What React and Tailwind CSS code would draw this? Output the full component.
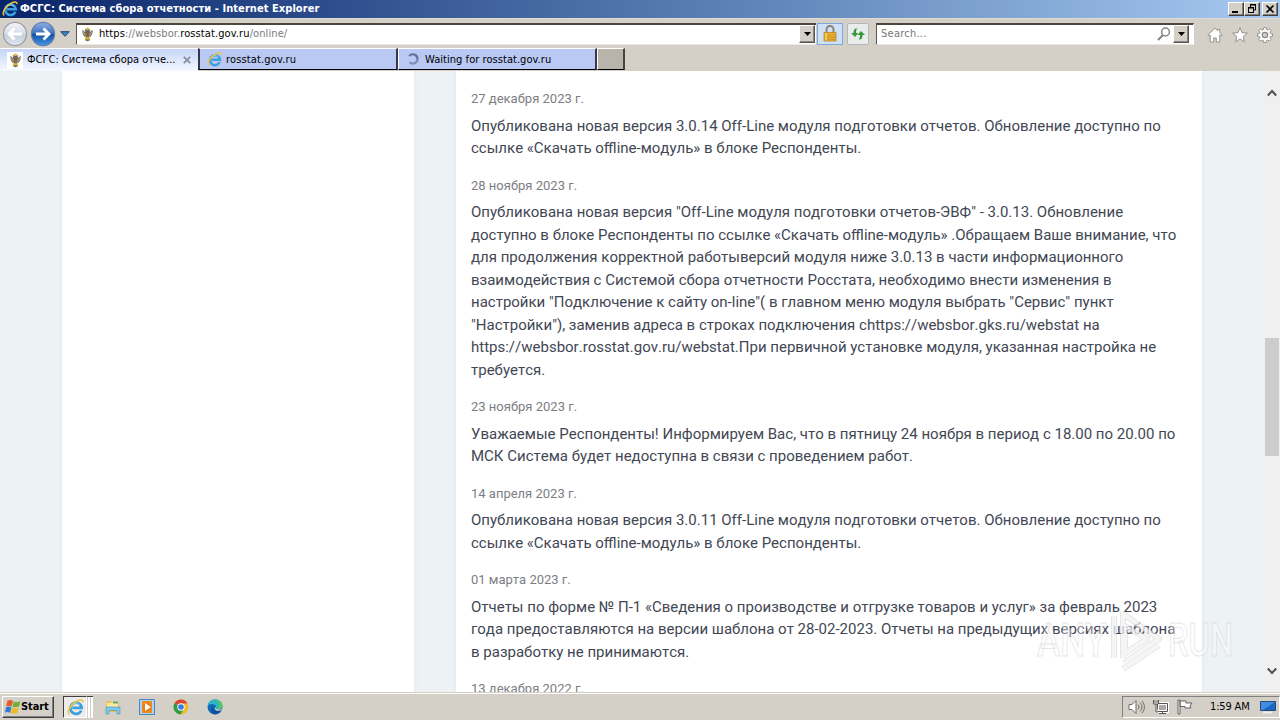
import React from 'react';

const news = [
  {
    date: '27 декабря 2023 г.',
    lines: [
      'Опубликована новая версия 3.0.14 Off-Line модуля подготовки отчетов. Обновление доступно по',
      'ссылке «Скачать offline-модуль» в блоке Респонденты.',
    ],
  },
  {
    date: '28 ноября 2023 г.',
    lines: [
      'Опубликована новая версия "Off-Line модуля подготовки отчетов-ЭВФ" - 3.0.13. Обновление',
      'доступно в блоке Респонденты по ссылке «Скачать offline-модуль» .Обращаем Ваше внимание, что',
      'для продолжения корректной работыверсий модуля ниже 3.0.13 в части информационного',
      'взаимодействия с Системой сбора отчетности Росстата, необходимо внести изменения в',
      'настройки "Подключение к сайту on-line"( в главном меню модуля выбрать "Сервис" пункт',
      '"Настройки"), заменив адреса в строках подключения сhttps://websbor.gks.ru/webstat на',
      'https://websbor.rosstat.gov.ru/webstat.При первичной установке модуля, указанная настройка не',
      'требуется.',
    ],
  },
  {
    date: '23 ноября 2023 г.',
    lines: [
      'Уважаемые Респонденты! Информируем Вас, что в пятницу 24 ноября в период с 18.00 по 20.00 по',
      'МСК Система будет недоступна в связи с проведением работ.',
    ],
  },
  {
    date: '14 апреля 2023 г.',
    lines: [
      'Опубликована новая версия 3.0.11 Off-Line модуля подготовки отчетов. Обновление доступно по',
      'ссылке «Скачать offline-модуль» в блоке Респонденты.',
    ],
  },
  {
    date: '01 марта 2023 г.',
    lines: [
      'Отчеты по форме № П-1 «Сведения о производстве и отгрузке товаров и услуг» за февраль 2023',
      'года предоставляются на версии шаблона от 28-02-2023. Отчеты на предыдущих версиях шаблона',
      'в разработку не принимаются.',
    ],
  },
  { date: '13 декабря 2022 г.', lines: [] },
];

const IeIcon = ({ className }) => (
  <svg viewBox="0 0 16 16" className={className} fill="none">
    <path d="M13.4 10.8A5.3 5.3 0 1 1 13.8 8.3H5" stroke="#3d9fe0" strokeWidth="2.6" />
    <path d="M4 6.5A4.8 4.8 0 0 1 12 5.5" stroke="#8fd3f6" strokeWidth=".9" />
    <path d="M2.2 14.4C-.8 12 3.8 5 9.2 2.1c3-1.6 6-1.8 5.8 1" stroke="#efc535" strokeWidth="1.5" />
  </svg>
);

const EagleIcon = ({ className }) => (
  <svg viewBox="0 0 16 16" className={className}>
    <path d="M8 3.2 6.2 2 4.8 3.1l1 .9-.5 1.2L2.4 3 3 7.6l1.8 2.9 2-.4L5.4 14 8 15.2l2.6-1.2-1.4-3.9 2 .4L13 7.6l.6-4.6-2.9 2.2-.5-1.2 1-.9L9.8 2z" fill="#6b675a" />
    <path d="M3.4 5 5 9M12.6 5 11 9M5 6l1 3M11 6l-1 3" stroke="#c9bd92" strokeWidth=".7" />
    <path d="M6.6 5.8h2.8v3L8 10.4 6.6 8.8z" fill="#8e5f3c" />
    <path d="M6.5.8h3v2.4h-3zM5.5 11h5v2.2h-5z" fill="#dbb52c" />
  </svg>
);

const NavCircle = ({ forward }) => (
  <svg viewBox="0 0 26 26" className="h-[26px] w-[26px]">
    <defs>
      <linearGradient id={forward ? 'navFwd' : 'navBack'} x1="0" y1="0" x2="0" y2="1">
        <stop offset="0" stopColor={forward ? '#8fb0e4' : '#f5f5f7'} />
        <stop offset=".48" stopColor={forward ? '#3b70bf' : '#d7dce6'} />
        <stop offset=".5" stopColor={forward ? '#154b9e' : '#c4ccda'} />
        <stop offset="1" stopColor={forward ? '#419ae8' : '#dfe7f1'} />
      </linearGradient>
    </defs>
    <circle cx="13" cy="13" r="11.6" fill={forward ? 'url(#navFwd)' : 'url(#navBack)'} stroke={forward ? '#6580ad' : '#9aa0aa'} strokeWidth="1.2" />
    <path
      d={forward ? 'M6 13H19M13.5 7.5 19 13l-5.5 5.5' : 'M20 13H7M12.5 7.5 7 13l5.5 5.5'}
      fill="none"
      stroke="#fff"
      strokeWidth="2.8"
    />
  </svg>
);

const DropButton = () => (
  <div className="flex h-[18px] w-[16px] shrink-0 items-center justify-center border border-t-white border-l-white border-r-[#55514c] border-b-[#55514c] bg-[#d4d0c8] shadow-[inset_-1px_-1px_0_#8b8780]">
    <svg viewBox="0 0 7 4" className="h-1 w-[7px]">
      <path d="M0 0h7L3.5 4z" fill="#000" />
    </svg>
  </div>
);

const WindowButton = ({ children }) => (
  <div className="h-[14px] w-4 border border-t-white border-l-white border-r-[#404040] border-b-[#404040] bg-[#d4d0c8] shadow-[inset_-1px_-1px_0_#808080]">
    <svg viewBox="0 0 14 12" className="h-3 w-[14px]" fill="none" stroke="#000">
      {children}
    </svg>
  </div>
);

const TitleBar = () => (
  <div className="flex h-[18px] items-center bg-linear-to-r from-[#0a246a] to-[#a6caf0] pl-[2px] pr-[2px]">
    <IeIcon className="h-4 w-4" />
    <span className="ml-[2px] flex-1 whitespace-nowrap pt-px text-[11px] font-bold tracking-[0.06px] text-white">
      ФСГС: Система сбора отчетности - Internet Explorer
    </span>
    <div className="flex">
      <WindowButton>
        <path d="M3 9h6" strokeWidth="2" />
      </WindowButton>
      <WindowButton>
        <path d="M5 2h6M5.5 2v3M10.5 2v5H9M3 5h6M3.5 5v5M3 9.5h6M8.5 5v5" />
        <path d="M5 1.5h6M3 4.5h6" />
      </WindowButton>
      <div className="w-[2px]" />
      <WindowButton>
        <path d="m3.5 2.5 7 7m0-7-7 7" strokeWidth="1.7" />
      </WindowButton>
    </div>
  </div>
);

const AddressRow = () => (
  <div className="flex h-[30px] items-center border-t border-[#dedbd0] pl-[2px]">
    <NavCircle />
    <div className="ml-[2px]">
      <NavCircle forward />
    </div>
    <svg viewBox="0 0 10 6" className="ml-[4px] h-[6px] w-[10px]">
      <path d="M.7.7h8.6L5 5.3z" fill="#3b86c4" stroke="#25426e" />
    </svg>
    <div className="ml-[6px] flex h-[22px] w-[740px] items-center border-t-2 border-l border-b border-t-[#4d463f] border-l-[#5c554d] border-b-[#eee8e2] bg-white pr-px pl-[3px]">
      <EagleIcon className="h-[15px] w-[15px]" />
      <span className="ml-1 flex-1 whitespace-nowrap pt-px text-[11px] tracking-[0.1px] text-[#7b7b7b]">
        <span className="text-black">https</span>://websbor.<span className="text-black">rosstat.gov.ru</span>/online/
      </span>
      <DropButton />
    </div>
    <div className="ml-[1px] flex h-[22px] w-[26px] items-center justify-center border border-[#7da7df] bg-[#cfe1f7]">
      <svg viewBox="0 0 14 17" className="h-[17px] w-[14px]">
        <path d="M3.5 8V4.5a3.5 3.5 0 0 1 7 0V8" fill="none" stroke="#8b8171" strokeWidth="1.9" />
        <path d="M1 7.5h12v8.5H1z" fill="#e7b02e" stroke="#b98424" strokeWidth=".8" />
        <path d="M1.5 10h11M1.5 12.3h11M1.5 14.4h11" stroke="#c48f2b" strokeWidth=".8" />
        <path d="M3 8v7.5" stroke="#f9d66e" strokeWidth="1.5" />
      </svg>
    </div>
    <div className="ml-[4px] flex h-[22px] w-[22px] items-center justify-center rounded-[2px] border border-[#b4b8ba] bg-[#e8edeb]">
      <svg viewBox="0 0 16 16" className="h-4 w-4" fill="#35983d">
        <path d="M7.5 2.5C4.5 2 3.5 3.7 3.5 7H1l4 4 3.5-4H6c0-2.2.2-3.5 1.5-4.5z" />
        <path d="M8.5 13.5c3 .5 4-1.2 4-4.5H15l-4-4-3.5 4H10c0 2.2-.2 3.5-1.5 4.5z" />
      </svg>
    </div>
    <div className="ml-[7px] flex h-[22px] w-[318px] items-center border-t-2 border-r border-b border-l border-t-[#4d463f] border-r-white border-b-[#eee8e2] border-l-[#5c554d] bg-white pr-1 pl-1">
      <span className="flex-1 pt-px text-[11px] tracking-[0.25px] text-[#777]">Search...</span>
      <svg viewBox="0 0 14 14" className="mr-[2px] h-[14px] w-[14px]" fill="none" stroke="#858585">
        <circle cx="8.5" cy="5" r="3.9" strokeWidth="1.5" />
        <path d="M5.8 8.2 1 13" strokeWidth="2" />
      </svg>
      <DropButton />
    </div>
    <div className="ml-[13px] flex gap-[9px] pt-[3px]">
      <svg viewBox="0 0 16 16" className="h-4 w-4" fill="#fff" stroke="#8b8987" strokeWidth=".9">
        <path d="M8 1 .8 8l1.1 1 1.3-1.1V15h3.5v-4h2.6v4h3.5V7.9L14.1 9l1.1-1-2.4-2.3V2.5h-2v1.2z" />
      </svg>
      <svg viewBox="0 0 16 16" className="h-4 w-4" fill="#fff" stroke="#8b8987" strokeWidth=".9">
        <path d="m8 .8 2 4.9 5.4.4-4.2 3.5 1.3 5.3L8 12.1l-4.5 2.8 1.3-5.3L.6 6.1 6 5.7z" />
      </svg>
      <svg viewBox="0 0 16 16" className="h-4 w-4" fill="#fff" stroke="#8b8987" strokeWidth=".9">
        <path d="M6.8.6h2.4l.4 2 1.3.5 1.7-1.2 1.6 1.6-1.2 1.8.5 1.2 2 .4v2.3l-2 .4-.5 1.3 1.2 1.7-1.6 1.6-1.7-1.1-1.3.5-.4 2H6.8l-.4-2-1.3-.5-1.7 1.1-1.6-1.6L3 10.9l-.5-1.3-2-.4V6.9l2-.4L3 5.3 1.8 3.5l1.6-1.6 1.7 1.2 1.3-.5z" />
        <circle cx="8" cy="8" r="2.7" fill="#d4d0c8" strokeWidth="1.2" />
      </svg>
    </div>
  </div>
);

const TabRow = () => (
  <div className="flex h-[23px] items-start text-[11px] text-black">
    <div className="flex h-[23px] w-[198px] items-center border-t border-t-white bg-linear-to-b from-[#c5d5f7] to-[#f5f8ff] pl-[7px]">
      <div className="flex h-[17px] w-[16px] items-center justify-center bg-white">
        <EagleIcon className="h-[15px] w-[15px]" />
      </div>
      <span className="ml-[4px] w-[149px] whitespace-nowrap pt-px">ФСГС: Система сбора отче...</span>
      <svg viewBox="0 0 8 8" className="ml-[7px] h-2 w-2" stroke="#858da3" strokeWidth="1.8">
        <path d="m.8.8 6.4 6.4m0-6.4L.8 7.2" />
      </svg>
    </div>
    <div className="flex h-[22px] w-[200px] items-center border-t border-r-2 border-b border-l-2 border-t-white border-r-[#38384a] border-b-black border-l-[#38384a] bg-[#b9c9f3] pl-[7px]">
      <IeIcon className="h-[15px] w-[15px]" />
      <span className="ml-1 pt-[2px] tracking-[0.15px]">rosstat.gov.ru</span>
    </div>
    <div className="flex h-[22px] w-[199px] items-center border-t border-r-2 border-b border-l border-t-white border-r-[#38384a] border-b-black border-l-white bg-[#b9c9f3] pl-[8px]">
      <svg viewBox="0 0 12 12" className="h-3 w-3" fill="none" strokeWidth="2.2">
        <path d="M2.2 3A4.7 4.7 0 0 1 10.5 6" stroke="#65729f" />
        <path d="M10.5 6A4.7 4.7 0 0 1 2.5 9.2" stroke="#7d8bb8" />
      </svg>
      <span className="ml-[6px] whitespace-nowrap pt-[2px] tracking-[0.05px]">Waiting for rosstat.gov.ru</span>
    </div>
    <div className="h-[22px] w-[28px] border-t border-r-2 border-b border-l border-t-white border-r-[#48443f] border-b-black border-l-white bg-[#b9b4ab]" />
  </div>
);

const NewsItem = ({ date, lines }) => (
  <div className="mb-4">
    <div className="mb-[6px] text-[13px] leading-[19.5px] text-[#7c7e83]">{date}</div>
    <div className="whitespace-nowrap text-[15px] leading-[22.5px] text-[#424753]">
      {lines.map((line) => (
        <div key={line}>{line}</div>
      ))}
    </div>
  </div>
);

const Watermark = () => (
  <div className="absolute top-[537px] left-[1037px] flex h-[64px] w-[200px] items-center font-[Roboto] font-medium text-white/40 [-webkit-text-stroke:1px_rgba(190,190,194,0.4)]">
    <span className="w-[69px] origin-left scale-x-[0.76] text-[46px] leading-none">ANY</span>
    <svg viewBox="0 0 60 64" className="h-[64px] w-[60px] shrink-0" fill="none" strokeLinejoin="round">
      <path d="M8 8v42M17 50V6l36 25-35 24M19 18v27l22-14zM17 61l36-24" stroke="#bcbcc0" strokeOpacity=".38" strokeWidth="6" />
      <path d="M8 8v42M17 50V6l36 25-35 24M19 18v27l22-14zM17 61l36-24" stroke="#fff" strokeOpacity=".6" strokeWidth="4" />
    </svg>
    <span className="ml-[2px] origin-left scale-x-[0.71] text-[46px] leading-none">RUN</span>
  </div>
);

const Page = () => (
  <div className="relative flex h-[621px] overflow-hidden bg-[#edf2f5] font-[Roboto,sans-serif] [font-kerning:none]">
    <div className="ml-[62px] w-[352px] shrink-0 bg-white shadow-[0_0_4px_#dfe5e9]" />
    <div className="ml-[42px] w-[746px] shrink-0 bg-white pt-[18px] pl-[15px] shadow-[0_0_4px_#dfe5e9]">
      {news.map((item) => (
        <NewsItem key={item.date} {...item} />
      ))}
    </div>
    <div className="ml-auto flex w-4 flex-col items-center bg-[#f0f0f0]">
      <svg viewBox="0 0 10 8" className="mt-[18px] h-2 w-[10px]" fill="none" stroke="#505050" strokeWidth="2">
        <path d="m.8 6.5 4.2-4.5 4.2 4.5" />
      </svg>
      <div className="mt-[241px] h-[118px] w-[14px] bg-[#cdcdcd]" />
      <svg viewBox="0 0 10 8" className="mt-auto mb-[17px] h-2 w-[10px]" fill="none" stroke="#505050" strokeWidth="2">
        <path d="m.8 1.5 4.2 4.5 4.2-4.5" />
      </svg>
    </div>
    <Watermark />
  </div>
);

const Taskbar = () => (
  <div className="flex h-[28px] items-center border-t border-[#d4d0c8] bg-[#d4d0c8] pl-[2px] shadow-[inset_0_1px_0_#fff]">
    <div className="mt-px flex h-[22px] w-[52px] items-center border border-t-white border-l-white border-r-[#404040] border-b-[#404040] pl-[2px] shadow-[inset_-1px_-1px_0_#808080]">
      <svg viewBox="0 0 16 16" className="h-4 w-4 shrink-0">
        <path d="M2.4 1.8c2-1.2 4-.9 5.6.2L6.7 7.5C5 6.5 3.3 6.6 1.2 7.3z" fill="#e65b2c" />
        <path d="M8.8 2.5c2 1 4.2.8 6.6-.5L14 7.400c-2 1-4.500.9-6.500.4z" fill="#74ae35" />
        <path d="M1 8.200c2-.8 4-.8 5.400.2l-1.300 5.500c-1.600-1-3.400-1-5.100-.3z" fill="#367ad0" />
        <path d="M7.200 8.800c2 .8 4.400.7 6.600-.4l-1.400 5.300c-2.200 1.200-4.400 1.100-6.600.3z" fill="#edbb29" />
      </svg>
      <span className="text-[11px] font-bold tracking-[-0.1px] text-black">Start</span>
    </div>
    <div className="mt-px ml-[9px] flex h-[22px] w-[24px] items-center justify-center border border-t-[#404040] border-r-white border-b-white border-l-[#404040] bg-[#eeece8]">
      <IeIcon className="h-[17px] w-[17px]" />
    </div>
    <div className="mt-px flex h-[22px] gap-px border-t border-[#404040] pl-px">
      <div className="w-[2px] bg-white" />
      <div className="w-[2px] bg-white" />
    </div>
    <svg viewBox="0 0 16 16" className="mt-px ml-[12px] h-4 w-4">
      <path d="M1 2h5l1 2h7v9H1z" fill="#e5c25c" />
      <path d="M2 4h11v5H2z" fill="#f9e9a3" />
      <path d="M8 2.5h5v2H8z" fill="#65ae56" />
      <path d="M1 8h14v7h-3v-3.5H4V15H1z" fill="#7fc8e8" stroke="#4699bd" strokeWidth=".6" />
    </svg>
    <svg viewBox="0 0 16 16" className="mt-px ml-[18px] h-4 w-4">
      <path d="M.5.5h15v15H.5z" fill="#a9d4f3" stroke="#4b87bb" />
      <path d="M3 2h10v12H3z" fill="#ed8b1d" />
      <circle cx="8" cy="8" r="4.5" fill="#ee7a12" />
      <path d="m6 4 6 4-6 4z" fill="#fff" />
    </svg>
    <svg viewBox="0 0 16 16" className="mt-px ml-[18px] h-4 w-4">
      <circle cx="8" cy="8" r="7.5" fill="#efbd29" />
      <path d="M8 8 1.5 4.2A7.5 7.5 0 0 1 14.5 4.5H8z" fill="#dc4435" />
      <path d="M8 8 1.5 4.2a7.5 7.5 0 0 0 6 11.300L11 9.700z" fill="#329b4b" />
      <circle cx="8" cy="8" r="3.7" fill="#fff" />
      <circle cx="8" cy="8" r="2.8" fill="#367de2" />
    </svg>
    <svg viewBox="0 0 16 16" className="mt-px ml-[18px] h-4 w-4">
      <circle cx="8" cy="8" r="7.5" fill="#146bb9" />
      <path d="M.6 7C1.5 2 5 .3 8.5.5c4.500.3 7 3.500 7 6.300 0 2.500-2 4-5 3.500-1.700-.3-1.200-1.500-1.200-2.500C9 5 3.500 3.500.6 7z" fill="#2eb6c8" />
      <path d="M9 .6c4.500.3 6.500 3.500 6.500 6.200 0 2.500-2 4-5 3.500 2-2.800 3-6-1.500-9.700z" fill="#54c861" />
      <path d="M6 7c-.8 4 3 6.500 8 4-1 2.500-3.300 4-5.500 4.300C4.500 15 2.500 10 6 7z" fill="#124f96" />
      <path d="M9.300 7.500c.2 1.200-1.300 2 1.200 2.800 2 .6 4 .3 4.800-1-.3 1.500-2 3-5 2.400-2.500-.4-3-2.500-1-4.200z" fill="#d4d0c8" />
    </svg>
    <div className="mt-px ml-auto flex h-[22px] w-[158px] items-center border border-t-[#808080] border-r-white border-b-white border-l-[#808080] pl-[5px]">
      <svg viewBox="0 0 17 16" className="h-4 w-[17px] shrink-0" fill="none" stroke="#6d6b69">
        <path d="M1 5.5h3l4-4v13l-4-4H1z" fill="#fff" />
        <path d="M10 5.5c1.3 1.5 1.3 3.5 0 5M12 3.5c2.500 2.800 2.500 6.200 0 9M14 2c3.200 3.700 3.200 8.300 0 12" />
      </svg>
      <svg viewBox="0 0 16 16" className="ml-[8px] h-4 w-4 shrink-0" fill="none" stroke="#55534f">
        <path d="M4.5 4.5h10v8h-10z" fill="#aaa9a5" stroke="#fff" strokeWidth="3" />
        <path d="M4.5 4.5h10v8h-10zM9.5 13v1.5M6 14.5h7" />
        <path d="M.5 1v4h5V1M2 1v3m2-3v3M3 5v8h2" fill="#fff" />
      </svg>
      <svg viewBox="0 0 16 16" className="ml-[8px] h-4 w-4 shrink-0" fill="#fff" stroke="#65625e">
        <path d="M1 1h2v14H1zM3 2h6v2h6l-2 3 1 2H8V7.5H3z" />
      </svg>
      <span className="ml-[17px] w-[43px] whitespace-nowrap text-[11px] tracking-[-0.15px] text-black">1:59 AM</span>
      <svg viewBox="0 0 16 16" className="ml-[7px] h-4 w-4 shrink-0">
        <path d="M.5 2.5h15v9H.5z" fill="#1767c5" stroke="#294b7b" />
        <path d="M1 3h14L3 11H1z" fill="#438cdf" />
        <path d="M3 13.5h9" stroke="#eee" strokeWidth="2" />
      </svg>
    </div>
  </div>
);

const App = () => (
  <div className="h-[720px] w-[1280px] overflow-hidden bg-[#d4d0c8] font-['DejaVu_Sans_Condensed','DejaVu_Sans',sans-serif]">
    <TitleBar />
    <AddressRow />
    <TabRow />
    <Page />
    <Taskbar />
  </div>
);

export default App;
